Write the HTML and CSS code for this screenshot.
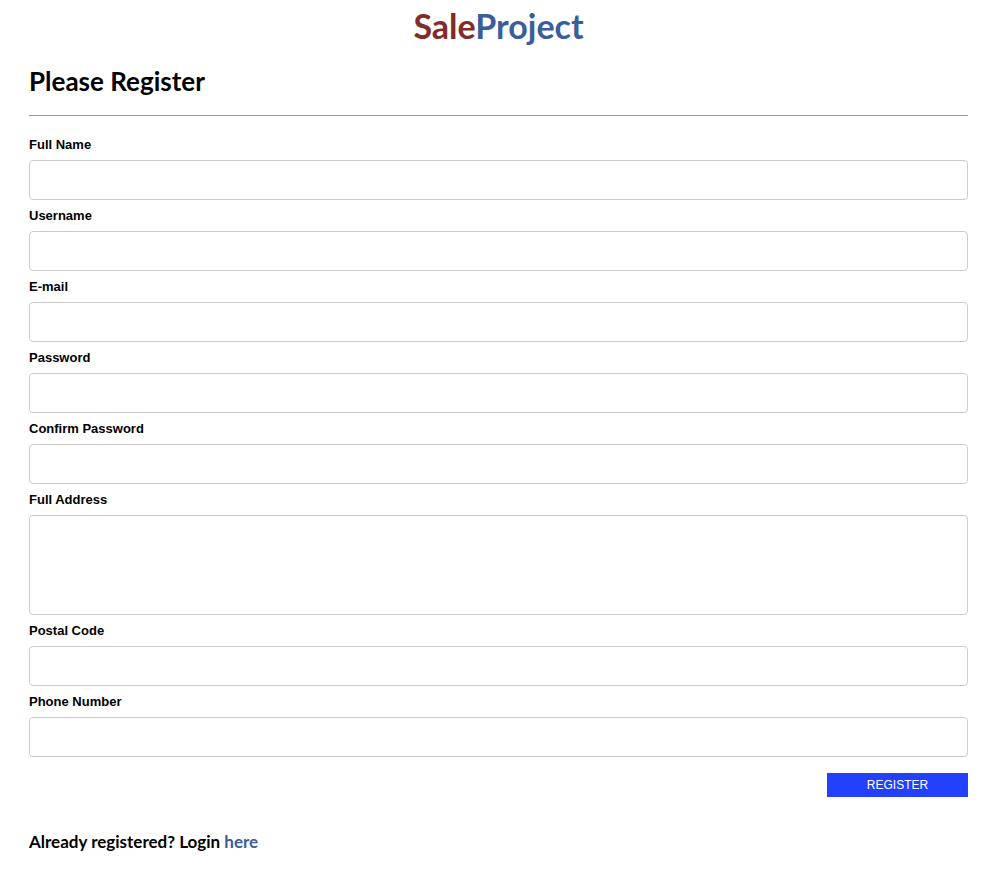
FILE: index.html
```html
<!DOCTYPE html>
<html>
<head>
<meta charset="utf-8">
<title>Register</title>
<link rel="stylesheet" href="styles.css">
</head>
<body>
<div class="page">
  <h1 class="brand"><span class="sale">Sale</span><span class="project">Project</span></h1>
  <h2 class="title">Please Register</h2>
  <hr class="rule">
  <form class="form">
    <label class="label">Full Name</label>
    <input class="field" type="text">
    <label class="label">Username</label>
    <input class="field" type="text">
    <label class="label">E-mail</label>
    <input class="field" type="text">
    <label class="label">Password</label>
    <input class="field" type="password">
    <label class="label">Confirm Password</label>
    <input class="field" type="password">
    <label class="label">Full Address</label>
    <textarea class="field area"></textarea>
    <label class="label">Postal Code</label>
    <input class="field" type="text">
    <label class="label">Phone Number</label>
    <input class="field" type="text">
    <div class="actions">
      <button class="btn" type="button">REGISTER</button>
    </div>
  </form>
  <p class="footer">Already registered? Login <a class="link" href="#">here</a></p>
</div>
</body>
</html>
```
FILE: styles.css
```css
html, body {
  margin: 0;
  padding: 0;
  background: #fff;
}
.page {
  margin: 0 33px 0 29px;
  font-family: "Lato", "DejaVu Sans", sans-serif;
}
.brand {
  margin: 0;
  padding-top: 5px;
  text-align: center;
  font-size: 34px;
  line-height: 42px;
  font-weight: 700;
}
.sale { color: #812b2b; }
.project { color: #3b5e98; }
.title {
  margin: 18px 0 0;
  font-size: 26px;
  line-height: 32px;
  font-weight: 700;
  color: #000;
}
.rule {
  margin: 18px 0 0;
  border: 0;
  border-top: 1px solid #999;
  height: 0;
}
.form {
  display: flex;
  flex-direction: column;
  padding-top: 21px;
}
.label {
  font-family: "Liberation Sans", Arial, sans-serif;
  font-size: 13px;
  line-height: 15px;
  font-weight: 700;
  color: #000;
  margin-bottom: 8px;
}
.field {
  box-sizing: border-box;
  height: 40px;
  width: 100%;
  border: 1px solid #ccc;
  border-radius: 4px;
  margin: 0 0 8px;
  padding: 6px 10px;
  font-size: 14px;
  background: #fff;
}
.area {
  height: 100px;
  resize: none;
}
.actions {
  display: flex;
  justify-content: flex-end;
  margin-top: 8px;
}
.btn {
  width: 141px;
  height: 24px;
  border: 0;
  background: #2341fd;
  color: #fff;
  font-family: "Liberation Sans", Arial, sans-serif;
  font-size: 12px;
  padding: 0;
}
.footer {
  margin: 35px 0 0;
  font-size: 17px;
  line-height: 20px;
  font-weight: 700;
  color: #000;
}
.link {
  color: #3b5e98;
  text-decoration: none;
}
```
